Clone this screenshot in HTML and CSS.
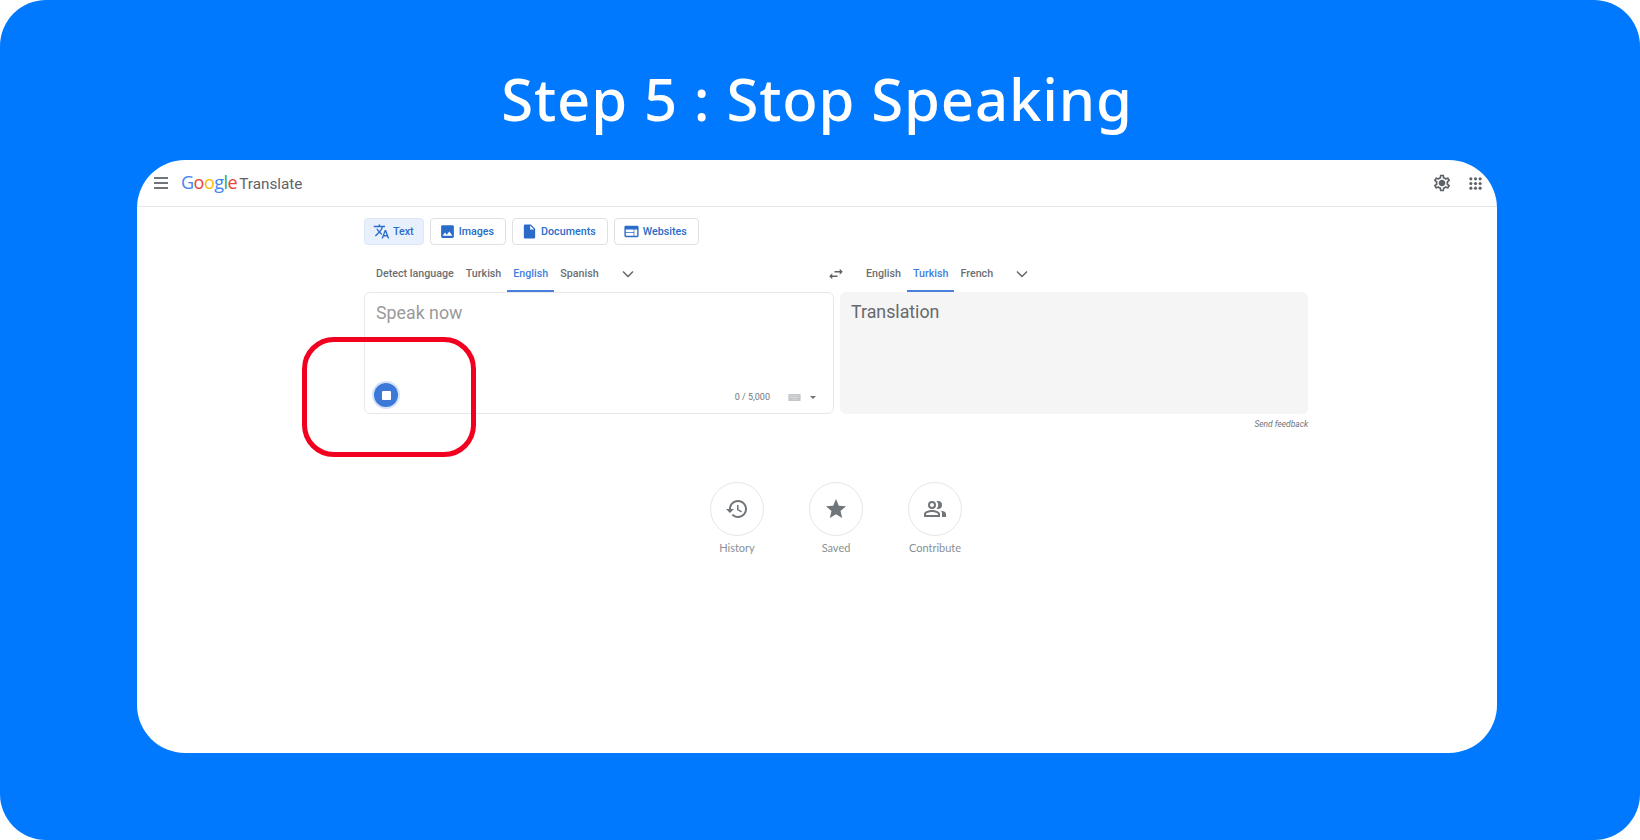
FILE: index.html
```html
<!DOCTYPE html>
<html lang="en">
<head>
  <meta charset="UTF-8" />
  <title>Step 5 : Stop Speaking</title>
  <link rel="stylesheet" href="styles.css">
</head>
<body>
  <div class="slide">
    <h1 class="slide-title">Step 5 : Stop Speaking</h1>

    <div class="card">
      <!-- Top bar -->
      <div class="top-bar">
        <div class="menu-btn">
          <div class="bar"></div>
          <div class="bar"></div>
          <div class="bar"></div>
        </div>
        <div class="logo">
          <span class="logo-word"><span class="c-blue">G</span><span class="c-red">o</span><span class="c-yellow">o</span><span class="c-blue">g</span><span class="c-green">l</span><span class="c-red">e</span></span>
          <span class="logo-name">Translate</span>
        </div>
        <div class="top-actions">
          <svg class="icon-gear" viewBox="0 0 24 24"><path d="M19.43 12.98c.04-.32.07-.64.07-.98 0-.34-.03-.66-.07-.98l2.11-1.65c.19-.15.24-.42.12-.64l-2-3.46c-.09-.16-.26-.25-.44-.25-.06 0-.12.01-.17.03l-2.49 1c-.52-.4-1.08-.73-1.69-.98l-.38-2.65C14.46 2.18 14.25 2 14 2h-4c-.25 0-.46.18-.49.42l-.38 2.65c-.61.25-1.17.59-1.69.98l-2.49-1c-.06-.02-.12-.03-.18-.03-.17 0-.34.09-.43.25l-2 3.46c-.13.22-.07.49.12.64l2.11 1.65c-.04.32-.07.65-.07.98 0 .33.03.66.07.98l-2.11 1.65c-.19.15-.24.42-.12.64l2 3.46c.09.16.26.25.44.25.06 0 .12-.01.17-.03l2.49-1c.52.4 1.08.73 1.69.98l.38 2.65c.03.24.24.42.49.42h4c.25 0 .46-.18.49-.42l.38-2.65c.61-.25 1.17-.59 1.69-.98l2.49 1c.06.02.12.03.18.03.17 0 .34-.09.43-.25l2-3.46c.12-.22.07-.49-.12-.64l-2.11-1.65zm-1.98-1.71c.04.31.05.52.05.73 0 .21-.02.43-.05.73l-.14 1.13.89.7 1.08.84-.7 1.21-1.27-.51-1.04-.42-.9.68c-.43.32-.84.56-1.25.73l-1.06.43-.16 1.13-.2 1.35h-1.4l-.19-1.35-.16-1.13-1.06-.43c-.43-.18-.83-.41-1.23-.71l-.91-.7-1.06.43-1.27.51-.7-1.21 1.08-.84.89-.7-.14-1.13c-.03-.31-.05-.54-.05-.74s.02-.43.05-.73l.14-1.13-.89-.7-1.08-.84.7-1.21 1.27.51 1.04.42.9-.68c.43-.32.84-.56 1.25-.73l1.06-.43.16-1.13.2-1.35h1.39l.19 1.35.16 1.13 1.06.43c.43.18.83.41 1.23.71l.91.7 1.06-.43 1.27-.51.7 1.21-1.07.85-.89.7.14 1.13zM12 8c-2.21 0-4 1.79-4 4s1.79 4 4 4 4-1.79 4-4-1.79-4-4-4z"/></svg>
          <svg class="icon-apps" viewBox="0 0 14 14">
            <circle cx="2" cy="2" r="1.7"/><circle cx="7" cy="2" r="1.7"/><circle cx="12" cy="2" r="1.7"/>
            <circle cx="2" cy="7" r="1.7"/><circle cx="7" cy="7" r="1.7"/><circle cx="12" cy="7" r="1.7"/>
            <circle cx="2" cy="12" r="1.7"/><circle cx="7" cy="12" r="1.7"/><circle cx="12" cy="12" r="1.7"/>
          </svg>
        </div>
      </div>

      <div class="main">
        <!-- Text / Images / Documents / Websites -->
        <div class="mode-tabs">
          <div class="mode-tab mode-tab-active">
            <svg class="mode-icon" viewBox="0 0 24 24"><path d="M12.87 15.07l-2.54-2.51.03-.03c1.74-1.94 2.98-4.17 3.71-6.53H17V4h-7V2H8v2H1v1.99h11.17C11.5 7.92 10.44 9.75 9 11.35 8.07 10.32 7.3 9.19 6.69 8h-2c.73 1.63 1.73 3.17 2.98 4.56l-5.09 5.02L4 19l5-5 3.11 3.11.76-2.04zM18.5 10h-2L12 22h2l1.12-3h4.75L21 22h2l-4.5-12zm-2.62 7l1.62-4.33L19.12 17h-3.24z"/></svg>
            <span>Text</span>
          </div>
          <div class="mode-tab">
            <svg class="mode-icon" viewBox="0 0 24 24"><path d="M21 19V5c0-1.1-.9-2-2-2H5c-1.1 0-2 .9-2 2v14c0 1.1.9 2 2 2h14c1.1 0 2-.9 2-2zM8.5 13.5l2.5 3.01L14.5 12l4.5 6H5l3.5-4.5z"/></svg>
            <span>Images</span>
          </div>
          <div class="mode-tab">
            <svg class="mode-icon" viewBox="0 0 24 24"><path d="M14 2H6c-1.1 0-2 .9-2 2v16c0 1.1.9 2 2 2h12c1.1 0 2-.9 2-2V8l-6-6zm-1 7V3.5L18.5 9H13z"/></svg>
            <span>Documents</span>
          </div>
          <div class="mode-tab">
            <svg class="mode-icon" viewBox="0 0 24 24"><path d="M20 4H4c-1.1 0-2 .9-2 2v12c0 1.1.9 2 2 2h16c1.1 0 2-.9 2-2V6c0-1.1-.9-2-2-2zm-5 14H4v-4h11v4zm0-5H4V9h11v4zm5 5h-4V9h4v9z"/></svg>
            <span>Websites</span>
          </div>
        </div>

        <!-- Languages -->
        <div class="lang-row">
          <div class="lang-group lang-source">
            <div class="lang-tab">Detect language</div>
            <div class="lang-tab">Turkish</div>
            <div class="lang-tab lang-tab-active">English</div>
            <div class="lang-tab">Spanish</div>
            <svg class="chevron" viewBox="0 0 12 8"><polyline points="1,1.5 6,6.5 11,1.5"/></svg>
          </div>
          <svg class="swap" viewBox="0 0 24 24"><path d="M6.99 11L3 15l3.99 4v-3H14v-2H6.99v-3zM21 9l-3.99-4v3H10v2h7.01v3L21 9z"/></svg>
          <div class="lang-group lang-target">
            <div class="lang-tab">English</div>
            <div class="lang-tab lang-tab-active">Turkish</div>
            <div class="lang-tab">French</div>
            <svg class="chevron" viewBox="0 0 12 8"><polyline points="1,1.5 6,6.5 11,1.5"/></svg>
          </div>
        </div>

        <!-- Text boxes -->
        <div class="boxes">
          <div class="box box-source">
            <div class="box-placeholder">Speak now</div>
            <div class="box-footer">
              <div class="stop-btn"><div class="stop-square"></div></div>
              <div class="box-tools">
                <span class="char-count">0 / 5,000</span>
                <svg class="keyboard" viewBox="0 0 14 8"><rect width="14" height="8" rx="1"/><path class="keyboard-keys" d="M2 2h10M2 4h10M4 6h6"/></svg>
                <span class="caret"></span>
              </div>
            </div>
          </div>
          <div class="box box-target">
            <div class="box-translation">Translation</div>
          </div>
        </div>
        <div class="feedback">Send feedback</div>

        <!-- History / Saved / Contribute -->
        <div class="shortcuts">
          <div class="shortcut">
            <div class="shortcut-circle">
              <svg class="shortcut-icon" viewBox="0 0 24 24"><path d="M13 3c-4.97 0-9 4.03-9 9H1l3.89 3.89.07.14L9 12H6c0-3.87 3.13-7 7-7s7 3.13 7 7-3.13 7-7 7c-1.93 0-3.68-.79-4.94-2.06l-1.42 1.42C8.27 19.99 10.51 21 13 21c4.97 0 9-4.03 9-9s-4.03-9-9-9zm-1 5v5l4.28 2.54.72-1.21-3.5-2.08V8H12z"/></svg>
            </div>
            <span>History</span>
          </div>
          <div class="shortcut">
            <div class="shortcut-circle">
              <svg class="shortcut-icon" viewBox="0 0 24 24"><path d="M12 17.27L18.18 21l-1.64-7.03L22 9.24l-7.19-.61L12 2 9.19 8.63 2 9.24l5.46 4.73L5.82 21z"/></svg>
            </div>
            <span>Saved</span>
          </div>
          <div class="shortcut">
            <div class="shortcut-circle">
              <svg class="shortcut-icon" viewBox="0 0 24 24">
                <path d="M9 4a4 4 0 1 0 0 8 4 4 0 0 0 0-8zm0 2a2 2 0 1 1 0 4 2 2 0 0 1 0-4z"/>
                <path d="M9 13c-2.7 0-8 1.3-8 4v3h16v-3c0-2.7-5.3-4-8-4zm-6 5v-1c0-.7 3.1-2 6-2s6 1.3 6 2v1H3z"/>
                <path d="M15 4c-.5 0-1 .1-1.400.2 1 1 1.600 2.300 1.600 3.800s-.6 2.800-1.600 3.800c.4.100.9.200 1.400.200a4 4 0 0 0 0-8z"/>
                <path d="M17.500 13.600c1.300.9 1.500 2.100 1.500 3.400v3h4v-3c0-2-3-3.100-5.500-3.400z"/>
              </svg>
            </div>
            <span>Contribute</span>
          </div>
        </div>
      </div>
    </div>

    <!-- Red highlight over the stop button -->
    <div class="highlight"></div>
  </div>
</body>
</html>
```

FILE: styles.css
```css
body {
  margin: 0;
  background-color: white;
  font-family: Roboto, Arial, sans-serif;
  overflow: hidden;
}

.slide {
  position: relative;
  width: 1640px;
  height: 840px;
  box-sizing: border-box;
  padding-top: 59px;
  background-color: #0079ff;
  border-radius: 46px;
}

.slide-title {
  margin: 0 0 0 -6px;
  height: 101px;
  text-align: center;
  color: white;
  font-family: "Noto Sans", sans-serif;
  font-size: 58px;
  font-weight: 500;
  line-height: 80px;
  letter-spacing: 0.85px;
}

.card {
  width: 1360px;
  height: 593px;
  margin-left: 137px;
  background-color: white;
  border-radius: 48px;
  overflow: hidden;
}

/* Top bar */
.top-bar {
  display: flex;
  align-items: center;
  height: 46px;
  padding: 0 15px 0 17px;
  border-bottom: 1px solid #e6e7e9;
}

.menu-btn {
  display: flex;
  flex-direction: column;
  gap: 3px;
}

.menu-btn .bar {
  width: 14px;
  height: 2px;
  background-color: #70757a;
}

.logo {
  display: flex;
  align-items: baseline;
  gap: 2px;
  margin: -3px 0 0 13px;
  font-family: "Open Sans", sans-serif;
}

.logo-word {
  font-size: 18px;
  letter-spacing: -0.5px;
}

.logo-name {
  color: #5f6368;
  font-family: Roboto, sans-serif;
  font-size: 15.3px;
}

.c-blue { color: #4285f4; }
.c-red { color: #ea4335; }
.c-yellow { color: #fbbc05; }
.c-green { color: #34a853; }

.top-actions {
  display: flex;
  align-items: center;
  gap: 17px;
  margin-left: auto;
}

.icon-gear {
  width: 20px;
  height: 20px;
  fill: #5f6368;
}

.icon-apps {
  width: 13px;
  height: 13px;
  fill: #5f6368;
}

/* Main column */
.main {
  width: 944px;
  margin-left: 227px;
}

.mode-tabs {
  display: flex;
  gap: 6px;
  padding-top: 11px;
}

.mode-tab {
  display: flex;
  align-items: center;
  gap: 3px;
  height: 25px;
  padding: 0 11px 0 8px;
  border: 1px solid #dfe1e5;
  border-radius: 4px;
  color: #2a6cc8;
  font-size: 10.7px;
  font-weight: 500;
}

.mode-tab-active {
  padding-right: 9px;
  background-color: #e8f0fe;
  border-color: #dde6f5;
}

.mode-icon {
  width: 17px;
  height: 17px;
  fill: #2a6cc8;
}

/* Languages */
.lang-row {
  display: flex;
  align-items: center;
  height: 47px;
}

.lang-group {
  display: flex;
  align-items: center;
  align-self: stretch;
}

.lang-source {
  width: 457px;
  box-sizing: border-box;
  padding-left: 6px;
}

.lang-target {
  margin-left: 9px;
}

.lang-tab {
  display: flex;
  align-items: center;
  align-self: stretch;
  box-sizing: border-box;
  padding: 11px 6px 0;
  border-bottom: 2px solid transparent;
  color: #6b6f73;
  font-size: 10.7px;
  font-weight: 500;
}

.lang-tab-active {
  border-bottom-color: #4a80dc;
  color: #3f7fe0;
}

.chevron {
  width: 12px;
  height: 8px;
  margin: 10px 0 0 17px;
  fill: none;
  stroke: #5f6368;
  stroke-width: 1.4;
}

.swap {
  width: 18px;
  height: 18px;
  margin: 10px 6px 0;
  fill: #5f6368;
}

/* Text boxes */
.boxes {
  display: flex;
  gap: 6px;
  height: 122px;
}

.box {
  box-sizing: border-box;
  border-radius: 6px;
}

.box-source {
  display: flex;
  flex-direction: column;
  justify-content: space-between;
  width: 470px;
  padding: 10px 17px 6px 9px;
  border: 1px solid #e6e8ea;
}

.box-target {
  width: 468px;
  padding: 10px 11px;
  background-color: #f5f5f5;
}

.box-placeholder {
  padding-left: 2px;
  color: #9a9a9a;
  font-size: 17.8px;
  line-height: 20px;
}

.box-translation {
  color: #66696d;
  font-size: 17.8px;
  line-height: 20px;
}

.box-footer {
  display: flex;
  align-items: center;
  justify-content: space-between;
}

.stop-btn {
  display: flex;
  align-items: center;
  justify-content: center;
  width: 24px;
  height: 24px;
  background-color: #3c78d8;
  border-radius: 50%;
  box-shadow: 0 0 0 2px #d5e3f8;
}

.stop-square {
  width: 9px;
  height: 9px;
  background-color: white;
  border-radius: 1px;
}

.box-tools {
  display: flex;
  align-items: center;
  margin-top: 4px;
  color: #70757a;
  font-size: 9px;
}

.char-count {
  margin-right: 18px;
}

.keyboard {
  width: 13px;
  height: 7px;
  fill: #c4c6c9;
}

.keyboard-keys {
  fill: none;
  stroke: #e3e4e6;
  stroke-width: 0.6;
}

.caret {
  width: 0;
  height: 0;
  margin-left: 9px;
  border-left: 3px solid transparent;
  border-right: 3px solid transparent;
  border-top: 3px solid #70757a;
}

.feedback {
  margin-top: 5px;
  text-align: right;
  color: #70757a;
  font-size: 8.4px;
  font-style: italic;
}

/* History / Saved / Contribute */
.shortcuts {
  display: flex;
  gap: 45px;
  width: 252px;
  margin: 53px 0 0 346px;
}

.shortcut {
  display: flex;
  flex-direction: column;
  align-items: center;
  gap: 5px;
  width: 54px;
  color: #8a8f94;
  font-family: Lato, sans-serif;
  font-size: 11px;
  white-space: nowrap;
}

.shortcut-circle {
  display: flex;
  align-items: center;
  justify-content: center;
  width: 54px;
  height: 54px;
  box-sizing: border-box;
  border: 1px solid #e5e6e8;
  border-radius: 50%;
}

.shortcut-icon {
  width: 24px;
  height: 24px;
  fill: #70757a;
}

/* Red highlight */
.highlight {
  position: absolute;
  left: 302px;
  top: 337px;
  width: 174px;
  height: 120px;
  box-sizing: border-box;
  border: 5.5px solid #f2001f;
  border-radius: 32px;
}
```
